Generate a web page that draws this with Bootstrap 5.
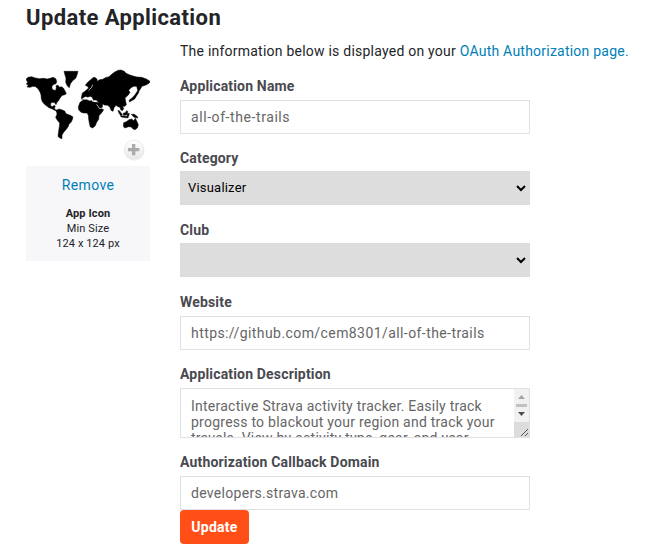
<!DOCTYPE html>
<html lang="en">
<head>
<meta charset="utf-8">
<title>Update Application</title>
<meta name="viewport" content="width=device-width, initial-scale=1">
<link href="https://cdn.jsdelivr.net/npm/bootstrap@5.3.0/dist/css/bootstrap.min.css" rel="stylesheet">
<style>
body{font-family:Roboto,"Liberation Sans",sans-serif;font-size:14px;line-height:20px;color:#242428;background:#fff;overflow:hidden}
.page{padding:0 0 0 26px}
.page-title{font-size:22px;line-height:35px;height:42px;font-weight:700;margin:0;letter-spacing:.4px}
.sidebar{width:124px}
.app-map{width:124px;height:124px;display:block}
.hint{background:#f7f7fa;height:95px;padding-top:9px;font-size:11px;line-height:15px;letter-spacing:.1px}
.hint a{font-size:14px;line-height:20px;letter-spacing:.35px;margin-bottom:11px}
a{color:#007fb6;text-decoration:none}
.main-col{margin-left:30px}
.intro{height:34px;margin:0;white-space:nowrap;letter-spacing:.23px;line-height:18px}
.form-label{display:block;height:20px;margin:0 0 4px;font-weight:700;color:#494950;letter-spacing:.17px}
.field{width:350px;margin-bottom:14px}
.field .form-control,.desc{height:34px;border:1px solid #dfdfe8;border-radius:0;padding:0 10px;font-size:14px;line-height:20px;color:#666;letter-spacing:.3px}
.field #name{letter-spacing:.58px}
.field #site{letter-spacing:.42px}
.field.pick{margin-bottom:15px}
.pick .form-label{margin-bottom:3px}
.picker{height:34px;background:#ddd;border:1px solid #dcdce2;color:#000;font-size:13px;padding:0 3px 0 7px;letter-spacing:.2px}
.field .desc{height:50px;overflow:hidden;padding:0 0 0 10px;letter-spacing:.24px}
.desc-text{padding-top:9px;line-height:16px;white-space:nowrap}
.bar{width:15px;background:#f1f1f1}
.btn-update,.btn-update:hover{width:69px;height:34px;padding:0;border:0;border-radius:4px;background:#ff4f17;color:#fff;font-size:14px;font-weight:700;letter-spacing:.25px}
</style>
<script src="https://cdn.jsdelivr.net/npm/bootstrap@5.3.0/dist/js/bootstrap.bundle.min.js"></script>
</head>
<body>
<main class="page">
<h1 class="page-title">Update Application</h1>
<div class="d-flex align-items-start">
<aside class="sidebar flex-shrink-0">
<svg class="app-map" viewBox="18 -54 372 372" aria-label="App icon">
<defs><linearGradient id="disc" x1="0" y1="0" x2="0" y2="1"><stop offset="0" stop-color="#fff"/><stop offset="1" stop-color="#e8e8e8"/></linearGradient></defs>
<g fill="#000" stroke="#000" stroke-width="1.500" stroke-linejoin="round">
<path d="M18 58L24 52L35 50L46 54L58 56L70 55L82 57L93 54L100 52L108 57L110 65L108 71L102 73L96 78L96 86L102 91L107 91L109 83L108 77L114 76L119 82L124 80L130 84L134 91L139 101L134 104L128 106L124 109L119 116L115 123L110 128L108 134L104 128L97 127L92 130L92 137L97 140L103 136L106 140L103 144L106 149L112 151L110 154L104 151L97 147L87 143L80 138L75 134L68 127L64 117L63 105L60 96L54 86L47 80L39 79L30 82L21 81L25 76L19 72L23 67Z"/>
<path d="M132 34L174 34L171 45L167 55L157 63L151 72L148 83L142 78L137 67L138 55L135 45Z"/>
<path d="M109 151L117 147L127 150L134 153L138 161L151 166L159 171L157 179L153 187L147 193L144 201L137 210L130 218L126 226L126 236L119 234L114 229L116 213L118 200L119 189L112 181L107 172L111 163Z"/>
<path d="M180 127L190 120L200 119L209 123L216 121L226 125L234 129L236 136L241 144L251 149L245 158L237 167L236 178L230 187L226 197L218 204L211 201L208 190L206 177L205 166L201 159L191 159L183 157L176 149L175 140Z"/>
<path d="M184 114L187 99L193 95L200 89L206 84L202 79L196 76L203 67L211 60L219 53L225 52L231 58L232 64L239 59L248 58L256 53L267 50L275 43L284 36L295 31L303 30L313 34L318 40L330 45L342 49L351 51L365 52L379 57L390 64L388 69L378 75L366 79L361 87L355 97L352 87L350 79L341 79L333 83L326 91L330 97L325 105L315 114L317 124L319 134L315 139L308 139L311 146L307 152L302 149L300 142L294 140L288 136L282 143L279 154L273 151L270 142L263 136L253 135L248 131L247 143L241 147L234 140L230 133L235 129L231 121L219 119L217 112L210 109L203 112L196 109L192 117L186 119Z"/>
<path d="M353 92L356 98L350 107L344 117L335 122L328 126L328 120L337 113L345 104ZM294 151L299 153L307 164L303 167L297 160ZM309 160L316 158L320 152L324 155L319 165L311 166ZM301 167L320 169L325 171L323 174L304 171ZM321 161L328 160L326 169L322 171ZM334 163L343 163L351 169L354 174L342 172Z"/>
<path d="M311 188L319 185L327 179L335 177L341 182L346 175L351 185L355 194L352 204L345 209L339 207L334 201L326 200L314 204L310 198Z"/>
</g>
<g fill="none" stroke="#fff" stroke-width="2"><path d="M230 133L239 146L249 143M206 92L215 82L218 74"/><path stroke-width="3.500" d="M187 118L195 113L204 115L214 117L218 123L228 125"/></g>
<circle cx="343" cy="272" r="31" fill="#000" opacity=".045"/><circle cx="342" cy="269" r="29" fill="url(#disc)" stroke="#e3e3e3" stroke-width="2"/>
<path d="M324 269H358M341 252V286" fill="none" stroke="#aaa" stroke-width="10"/>
</svg>
<div class="hint text-center"><a href="#" class="d-block">Remove</a><b>App Icon</b><br>Min Size<br>124 x 124 px</div>
</aside>
<form class="main-col">
<p class="intro">The information below is displayed on your <a href="#">OAuth Authorization page.</a></p>
<div class="field"><label class="form-label" for="name">Application Name</label><input id="name" class="form-control shadow-none" value="all-of-the-trails"></div>
<div class="field pick"><span class="form-label">Category</span><div class="picker d-flex align-items-center justify-content-between"><span>Visualizer</span><svg width="10" height="8" viewBox="0 0 10 8"><path d="M1 2L5 6L9 2" fill="none" stroke="#000" stroke-width="2"/></svg></div></div>
<div class="field pick"><span class="form-label">Club</span><div class="picker d-flex align-items-center justify-content-end"><svg width="10" height="8" viewBox="0 0 10 8"><path d="M1 2L5 6L9 2" fill="none" stroke="#000" stroke-width="2"/></svg></div></div>
<div class="field"><label class="form-label" for="site">Website</label><input id="site" class="form-control shadow-none" value="https://github.com/cem8301/all-of-the-trails"></div>
<div class="field"><span class="form-label">Application Description</span><div class="desc d-flex justify-content-between"><div class="desc-text">Interactive Strava activity tracker. Easily track<br>progress to blackout your region and track your<br>travels. View by activity type, gear, and year.</div>
<svg class="bar flex-shrink-0" width="15" height="48" viewBox="0 0 15 48"><path d="M4 10L7.500 6L11 10Z" fill="#a3a3a3"/><path d="M2 15H13V18H2Z" fill="#c1c1c1"/><path d="M4 23H11L7.500 27Z" fill="#505050"/><path d="M0 33H15V48H0Z" fill="#dcdcdc"/><path d="M7 47L14 40M11 47L14 44" stroke="#555" fill="none"/></svg></div></div>
<div class="field mb-0"><label class="form-label" for="domain">Authorization Callback Domain</label><input id="domain" class="form-control shadow-none" value="developers.strava.com"></div>
<button type="button" class="btn btn-update d-block">Update</button>
</form>
</div>
</main>
</body>
</html>
